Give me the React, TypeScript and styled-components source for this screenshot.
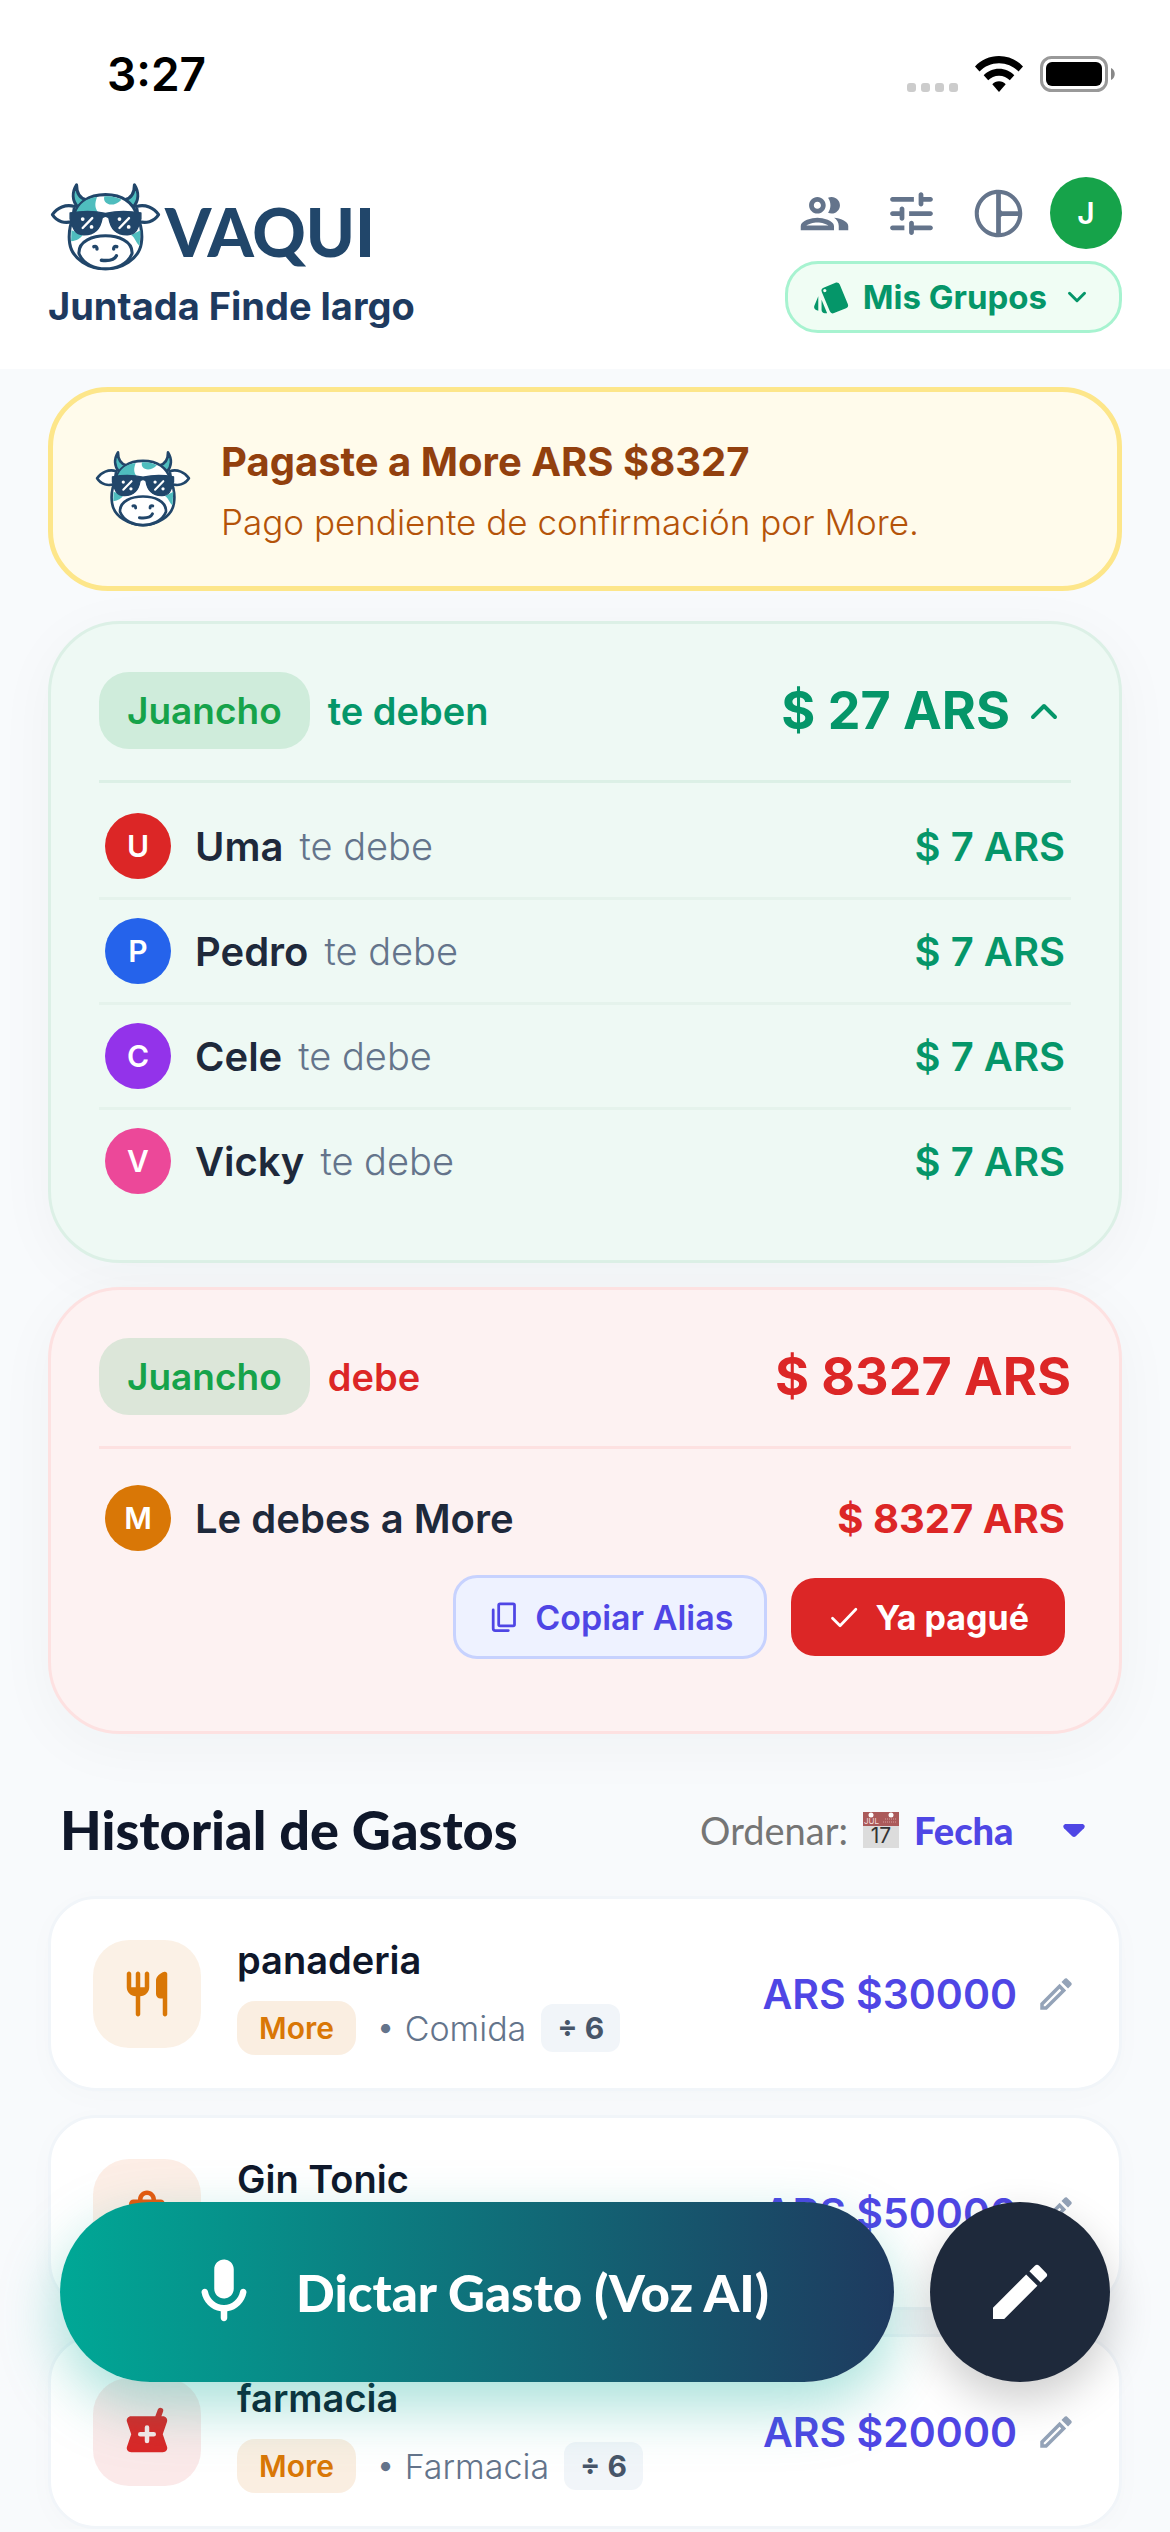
import { useState } from "react";
import styled, { createGlobalStyle } from "styled-components";
import { MdEdit, MdOutlineEdit, MdOutlineGroup, MdStyle } from "react-icons/md";

const GlobalStyle = createGlobalStyle`
    * {
        box-sizing: border-box;
    }

    body {
        margin: 0;
        background: #f8fafc;
        font-family: Inter, "Liberation Sans", sans-serif;
    }

    button, select {
        font-family: inherit;
        margin: 0;
        padding: 0;
        border: none;
        background: none;
        cursor: pointer;
    }

    svg {
        display: block;
        flex-shrink: 0;
    }
`

const Top = styled.header`
    background: #fff;
    padding: 0 48px 36px;
`

const StatusBar = styled.div`
    height: 177px;
    padding: 45px 7px 0 59px;
    display: flex;
    align-items: flex-start;
    justify-content: space-between;
`

const Clock = styled.span`
    color: #000;
    font-size: 46px;
    line-height: 58px;
    font-weight: 600;
`

const StatusIcons = styled.div`
    height: 58px;
    display: flex;
    align-items: center;
    gap: 17px;
`

const TopRow = styled.div`
    display: flex;
    justify-content: space-between;
    align-items: flex-start;
`

const Brand = styled.div`
    display: flex;
    flex-direction: column;
`

const BrandName = styled.div`
    height: 99px;
    padding-left: 2px;
    display: flex;
    align-items: center;
    gap: 4px;
`

const Wordmark = styled.span`
    padding-top: 9px;
    color: #21466a;
    font-family: Lato, "Liberation Sans", sans-serif;
    font-size: 66px;
    font-weight: 900;
`

const GroupName = styled.h1`
    margin: 6px 0 0;
    color: #1e3a5f;
    font-size: 38px;
    line-height: 48px;
    font-weight: 700;
`

const Tools = styled.div`
    display: flex;
    flex-direction: column;
    align-items: flex-end;
    gap: 12px;
`

const ToolIcons = styled.div`
    display: flex;
    align-items: center;
`

const ToolButton = styled.button`
    width: 87px;
    height: 72px;
    display: flex;
    align-items: center;
    justify-content: center;
    color: #64748b;
`

const Avatar = styled.span<{ $color: string, $size: number }>`
    width: ${p => p.$size}px;
    height: ${p => p.$size}px;
    border-radius: 50%;
    background: ${p => p.$color};
    color: #fff;
    font-size: 30px;
    font-weight: 600;
    display: flex;
    align-items: center;
    justify-content: center;
    flex-shrink: 0;
`

const ProfileButton = styled.button`
    margin-left: 8px;
`

const GroupsButton = styled.button`
    height: 72px;
    padding: 0 24px;
    display: flex;
    align-items: center;
    gap: 12px;
    border: 3px solid #a7f3d0;
    border-radius: 33px;
    background: #f0fdf4;
    color: #059669;
    font-size: 33px;
    font-weight: 700;
`

const Page = styled.main`
    padding: 18px 48px 0;
`

const Notice = styled.section`
    height: 204px;
    padding: 0 42px;
    display: flex;
    align-items: center;
    gap: 30px;
    border: 5px solid #fde68a;
    border-radius: 60px;
    background: #fffbeb;
`

const NoticeBody = styled.div`
    padding-top: 6px;
`

const NoticeTitle = styled.div`
    color: #92400e;
    font-size: 40px;
    line-height: 54px;
    font-weight: 700;
`

const NoticeText = styled.div`
    margin-top: 6px;
    color: #b45309;
    font-size: 35px;
    line-height: 54px;
    font-weight: 300;
`

const tones = {
    green: { text: "#059669", background: "#eef9f4", line: "#dcf0e6", soft: "#e5f3ec" },
    red: { text: "#dc2626", background: "#fdf2f2", line: "#fde1e1", soft: "#fde1e1" },
}

type Tone = keyof typeof tones

const BalanceCard = styled.section<{ $tone: Tone }>`
    margin-top: ${p => p.$tone === "green" ? 30 : 24}px;
    padding: 48px;
    border: 3px solid ${p => tones[p.$tone].line};
    border-radius: 72px;
    background: ${p => tones[p.$tone].background};
    color: ${p => tones[p.$tone].text};
    box-shadow: 0 12px 60px rgba(30, 41, 59, 0.04);
`

const BalanceHead = styled.div<{ $tone: Tone }>`
    padding-bottom: 31px;
    margin-bottom: 12px;
    border-bottom: 3px solid ${p => tones[p.$tone].line};
    display: flex;
    align-items: center;
    font-size: 38px;
    font-weight: 600;
`

const PersonChip = styled.span`
    height: 77px;
    padding: 0 28px;
    margin-right: 18px;
    display: flex;
    align-items: center;
    border-radius: 30px;
    background: rgba(22, 163, 74, 0.14);
    color: #16a34a;
    font-size: 37px;
`

const Total = styled.span`
    margin-left: auto;
    font-size: 52px;
    line-height: 66px;
    font-weight: 700;
`

const ToggleButton = styled.button`
    margin-left: 10px;
    padding-right: 3px;
    color: inherit;
`

const List = styled.ul`
    margin: 0;
    padding: 0;
    list-style: none;
`

const DebtLine = styled.div`
    padding: 18px 6px;
    display: flex;
    align-items: center;
    font-size: 40px;
    font-weight: 600;
`

const DebtItem = styled.li`
    &:not(:last-child) {
        border-bottom: 3px solid ${tones.green.soft};
    }
`

const DebtName = styled.span`
    margin-left: 24px;
    color: #1e293b;
`

const DebtNote = styled.span`
    margin-left: 16px;
    color: #64748b;
    font-size: 38px;
    font-weight: 300;
`

const DebtAmount = styled.span<{ $bold?: boolean }>`
    margin-left: auto;
    font-weight: ${p => p.$bold ? 700 : 600};
`

const OwedItem = styled.li`
    padding: 6px 0 24px;
`

const Actions = styled.div`
    padding: 6px 6px 0;
    display: flex;
    align-items: center;
    justify-content: flex-end;
    gap: 24px;
`

const ActionButton = styled.button<{ $filled?: boolean }>`
    height: ${p => p.$filled ? 78 : 84}px;
    padding: 0 ${p => p.$filled ? 36 : 31}px;
    display: flex;
    align-items: center;
    gap: 15px;
    border: ${p => p.$filled ? "none" : "3px solid #c7d2fe"};
    border-radius: 24px;
    background: ${p => p.$filled ? "#dc2626" : "#eef2ff"};
    color: ${p => p.$filled ? "#fff" : "#4f46e5"};
    font-size: 34px;
    font-weight: ${p => p.$filled ? 700 : 600};
`

const HistoryHead = styled.div`
    padding: 63px 36px 33px 12px;
    display: flex;
    align-items: center;
    justify-content: space-between;
    font-family: Lato, "Liberation Sans", sans-serif;
`

const HistoryTitle = styled.h2`
    margin: 0;
    color: #0f172a;
    font-size: 54px;
    line-height: 66px;
    font-weight: 900;
`

const Sort = styled.div`
    display: flex;
    align-items: center;
    font-size: 38px;
    color: #757575;
`

const SortLabel = styled.label`
    margin-right: 15px;
`

const SortSelect = styled.select`
    width: 148px;
    margin-left: 15px;
    appearance: none;
    outline: none;
    color: #4f46e5;
    font-size: 38px;
    font-weight: 900;
`

const Expenses = styled.ul`
    margin: 0;
    padding: 0;
    list-style: none;
    display: flex;
    flex-direction: column;
    gap: 24px;
`

const ExpenseCard = styled.li`
    height: 195px;
    padding: 0 42px;
    display: flex;
    align-items: center;
    border: 3px solid #f1f5f9;
    border-radius: 48px;
    background: #fff;
    box-shadow: 0 6px 30px rgba(15, 23, 42, 0.02);
`

const ExpenseIcon = styled.span<{ $color: string }>`
    width: 108px;
    height: 108px;
    margin-right: 36px;
    display: flex;
    align-items: center;
    justify-content: center;
    flex-shrink: 0;
    border-radius: 36px;
    background: ${p => p.$color}1a;
    color: ${p => p.$color};
`

const ExpenseBody = styled.div`
    padding-top: 4px;
`

const ExpenseTitle = styled.div`
    margin-bottom: 17px;
    color: #0f172a;
    font-size: 38px;
    line-height: 48px;
    font-weight: 600;
`

const ExpenseInfo = styled.div`
    display: flex;
    align-items: center;
    color: #64748b;
    font-size: 34px;
    font-weight: 300;
`

const PayerChip = styled.span`
    height: 54px;
    padding: 0 22px;
    margin-right: 20px;
    display: flex;
    align-items: center;
    border-radius: 18px;
    background: #d977061f;
    color: #d97706;
    font-size: 30px;
    font-weight: 600;
`

const SplitChip = styled.span`
    height: 48px;
    padding: 0 16px;
    margin-left: 15px;
    display: flex;
    align-items: center;
    border-radius: 12px;
    background: #f1f5f9;
    color: #475569;
    font-size: 30px;
    font-weight: 700;
`

const ExpenseAmount = styled.span`
    margin-left: auto;
    color: #4f46e5;
    font-size: 41px;
    font-weight: 600;
`

const EditButton = styled.button`
    margin-left: 18px;
    color: #94a3b8;
`

const FloatingBar = styled.div`
    position: fixed;
    left: 60px;
    right: 60px;
    bottom: 150px;
    display: flex;
    gap: 36px;
`

const VoiceButton = styled.button`
    flex: 1;
    height: 180px;
    display: flex;
    align-items: center;
    justify-content: center;
    gap: 33px;
    border-radius: 90px;
    background: linear-gradient(90deg, #00a896, #1e3a5f);
    box-shadow: 0 24px 60px rgba(0, 168, 150, 0.35);
    color: #fff;
    font-family: Lato, "Liberation Sans", sans-serif;
    font-size: 51px;
    font-weight: 900;
`

const WriteButton = styled.button`
    width: 180px;
    height: 180px;
    display: flex;
    align-items: center;
    justify-content: center;
    border-radius: 50%;
    background: #1e293b;
    box-shadow: 0 18px 45px rgba(0, 0, 0, 0.2);
    color: #fff;
`

const Cow = ({ width }: { width: number }) => (
    <svg width={width} viewBox="34 30 326 262" fill="none" stroke="#21466a" strokeWidth="9" strokeLinejoin="round" strokeLinecap="round">
        <path fill="#fff" d="M106 102C80 94 55 106 41 126c14 22 38 26 58 20zM288 102c26-8 51 4 65 24-14 22-38 26-58 20z" />
        <path fill="#4fbdbe" d="M112 38c-14 22-13 47 4 66l24-22c-20-5-28-20-28-44zM282 38c14 22 13 47-4 66l-24-22c20-5 28-20 28-44z" />
        <path fill="#fff" d="M197 67c-52 0-82 26-93 62-12 28-16 58-12 82 7 46 58 74 105 74s98-28 105-74c4-24 0-54-12-82-11-36-41-62-93-62z" />
        <g fill="#4fbdbe" stroke="none">
            <path d="M172 74c-6 18-8 30 4 46l-66 2c8-28 32-45 62-48zM194 72c-8 20 22 38 50 10-14-8-32-12-50-10zM97 172l34 12c-8 12-18 18-35 20zM300 172l-28 14c12 8 14 22 25 32z" />
        </g>
        <path fill="#fff" d="M119 240c-2-38 42-52 78-52s80 14 78 52c-12 32-48 45-78 45s-66-13-78-45z" />
        <path fill="#21466a" strokeWidth="4" d="M93 121c34-6 72-6 104 1 32-7 70-7 104-1v18c-6 6-4 45-39 46-34 1-50-18-55-49-6-7-14-7-20 0-5 31-21 50-55 49-35-1-33-40-39-46z" />
        <g stroke="#fff" strokeWidth="7">
            <path d="M130 165l28-29M238 165l28-29" />
            <path strokeWidth="11" d="M130 139h.1M156 162h.1M238 139h.1M265 162h.1" />
        </g>
        <path strokeWidth="10" d="M163 220q9-3 9 7M230 220q-9-3-9 7M185 260q36 4 44-13" />
    </svg>
)

const icons = {
    tune: "M3 18c0 .55.45 1 1 1h5v-2H4c-.55 0-1 .45-1 1zM3 6c0 .55.45 1 1 1h9V5H4c-.55 0-1 .45-1 1zm10 14v-1h7c.55 0 1-.45 1-1s-.45-1-1-1h-7v-1c0-.55-.45-1-1-1s-1 .45-1 1v4c0 .55.45 1 1 1s1-.45 1-1zM7 10v1H4c-.55 0-1 .45-1 1s.45 1 1 1h3v1c0 .55.45 1 1 1s1-.45 1-1v-4c0-.55-.45-1-1-1s-1 .45-1 1zm14 2c0-.55-.45-1-1-1h-9v2h9c.55 0 1-.45 1-1zm-5-3c.55 0 1-.45 1-1V7h3c.55 0 1-.45 1-1s-.45-1-1-1h-3V4c0-.55-.45-1-1-1s-1 .45-1 1v4c0 .55.45 1 1 1z",
    pie: "M12 2C6.48 2 2 6.48 2 12s4.48 10 10 10 10-4.48 10-10S17.52 2 12 2zm1 1.77c3.8.45 6.78 3.43 7.23 7.23h-6.73L13 10.5zM3.7 12c0-4.2 3.13-7.7 7.3-8.23v16.46c-4.17-.53-7.3-4.03-7.3-8.23zm9.3 8.23V13.5l.5-.5h6.73c-.45 3.8-3.43 6.78-7.23 7.23z",
    food: "M16 6v6c0 1.1.9 2 2 2h1v7c0 .55.45 1 1 1s1-.45 1-1V3.13c0-.65-.61-1.13-1.24-.98C17.6 2.68 16 4.51 16 6zm-5 3H9V3c0-.55-.45-1-1-1s-1 .45-1 1v6H5V3c0-.55-.45-1-1-1s-1 .45-1 1v6c0 2.21 1.79 4 4 4v8c0 .55.45 1 1 1s1-.45 1-1v-8c2.21 0 4-1.79 4-4V3c0-.55-.45-1-1-1s-1 .45-1 1v6z",
    bag: "M18 6h-2c0-2.21-1.79-4-4-4S8 3.79 8 6H6c-1.1 0-2 .9-2 2v12c0 1.1.9 2 2 2h12c1.1 0 2-.9 2-2V8c0-1.1-.9-2-2-2zm-6-2c1.1 0 2 .9 2 2h-4c0-1.1.9-2 2-2z",
    pharmacy: "M19 5h-.6l.75-2.1a1.25 1.25 0 0 0-2.35-.85L15.7 5H5c-1.4 0-2.3 1.2-1.9 2.4L5 13l-1.9 5.6C2.7 19.8 3.6 21 5 21h14c1.4 0 2.3-1.2 1.9-2.4L19 13l1.9-5.6C21.3 6.2 20.4 5 19 5zm-4 9h-2v2a1 1 0 0 1-2 0v-2H9a1 1 0 0 1 0-2h2v-2a1 1 0 0 1 2 0v2h2a1 1 0 0 1 0 2z",
    mic: "M12 14c1.66 0 3-1.34 3-3V5c0-1.66-1.34-3-3-3S9 3.34 9 5v6c0 1.66 1.34 3 3 3zm5.91-3c-.49 0-.9.36-.98.85C16.52 14.2 14.47 16 12 16s-4.52-1.8-4.93-4.15c-.08-.49-.49-.85-.98-.85-.61 0-1.09.54-1 1.14.49 3 2.89 5.35 5.91 5.78V20c0 .55.45 1 1 1s1-.45 1-1v-2.08c3.02-.43 5.42-2.78 5.91-5.78.1-.6-.39-1.14-1-1.14z",
}

type IconName = keyof typeof icons

const Icon = ({ name, size }: { name: IconName, size: number }) => (
    <svg width={size} height={size} viewBox="0 0 24 24" fill="currentColor">
        <path d={icons[name]} />
    </svg>
)

const LineIcon = ({ d, size }: { d: string, size: number }) => (
    <svg width={size} height={size} viewBox="0 0 24 24" fill="none" stroke="currentColor" strokeWidth="2" strokeLinecap="round" strokeLinejoin="round">
        <path d={d} />
    </svg>
)

const Signal = () => (
    <svg width="51" height="36" viewBox="0 0 51 36" fill="#ccc">
        <rect x="0" y="27" width="9" height="9" rx="3" />
        <rect x="14" y="27" width="9" height="9" rx="3" />
        <rect x="28" y="27" width="9" height="9" rx="3" />
        <rect x="42" y="27" width="9" height="9" rx="3" />
    </svg>
)

const Wifi = () => (
    <svg width="48" height="36" viewBox="0 0 48 36">
        <path d="M24 0C14.6 0 6.2 3.8 0 10.5l4.5 5C9.6 10.2 16.4 7.2 24 7.2s14.4 3 19.5 8.3l4.5-5C41.8 3.8 33.4 0 24 0z" />
        <path d="M24 12.7c-6 0-11.4 2.5-15.3 6.5l4.5 5.1c2.7-2.8 6.5-4.6 10.8-4.6s8.1 1.8 10.8 4.6l4.5-5.1c-3.9-4-9.3-6.5-15.3-6.5z" />
        <path d="M24 25.2c-2.7 0-5.1 1.2-6.7 3L24 36l6.7-7.8c-1.6-1.8-4-3-6.7-3z" />
    </svg>
)

const Battery = () => (
    <svg width="75" height="36" viewBox="0 0 75 36">
        <rect x="1.5" y="1.5" width="65" height="33" rx="10" fill="none" stroke="#999" strokeWidth="3" />
        <rect x="6" y="6" width="56" height="24" rx="6" />
        <path d="M71 12c5 2 5 10 0 12z" fill="#888" />
    </svg>
)

const Calendar = () => (
    <svg width="36" height="36" viewBox="0 0 36 36">
        <rect width="36" height="36" fill="#dcdcdc" />
        <rect width="36" height="14" fill="#ab5a5a" />
        <circle cx="8" cy="3" r="2.5" fill="#fff" />
        <circle cx="28" cy="3" r="2.5" fill="#fff" />
        <path d="M20 10h14M22 7h12" stroke="#c07c7c" strokeWidth="2" strokeDasharray="1 1" />
        <text x="1" y="12" fontFamily="Inter, sans-serif" fontSize="8" fill="#f3dcdc">JUL</text>
        <text x="18" y="31" fontFamily="Inter, sans-serif" fontSize="21" textAnchor="middle" fill="#333">17</text>
    </svg>
)

const debtors = [
    { name: "Uma", color: "#dc2626", amount: 7 },
    { name: "Pedro", color: "#2563eb", amount: 7 },
    { name: "Cele", color: "#9333ea", amount: 7 },
    { name: "Vicky", color: "#ec4899", amount: 7 },
]

const expenses: { title: string, payer: string, category: string, split: number, amount: number, icon: IconName, color: string }[] = [
    { title: "panaderia", payer: "More", category: "Comida", split: 6, amount: 30000, icon: "food", color: "#d97706" },
    { title: "Gin Tonic", payer: "More", category: "Compras", split: 6, amount: 50000, icon: "bag", color: "#ea580c" },
    { title: "farmacia", payer: "More", category: "Farmacia", split: 6, amount: 20000, icon: "pharmacy", color: "#dc2626" },
]

export default function App() {

    const [ open, setOpen ] = useState(true);
    const [ sort, setSort ] = useState("fecha");

    return (
        <>
            <GlobalStyle />
            <Top>
                <StatusBar>
                    <Clock>3:27</Clock>
                    <StatusIcons>
                        <Signal />
                        <Wifi />
                        <Battery />
                    </StatusIcons>
                </StatusBar>
                <TopRow>
                    <Brand>
                        <BrandName>
                            <Cow width={111} />
                            <Wordmark>VAQUI</Wordmark>
                        </BrandName>
                        <GroupName>Juntada Finde largo</GroupName>
                    </Brand>
                    <Tools>
                        <ToolIcons>
                            <ToolButton aria-label="Participantes"><MdOutlineGroup size={57} /></ToolButton>
                            <ToolButton aria-label="Ajustes"><Icon name="tune" size={57} /></ToolButton>
                            <ToolButton aria-label="Resumen"><Icon name="pie" size={57} /></ToolButton>
                            <ProfileButton aria-label="Perfil"><Avatar $color="#16a34a" $size={72}>J</Avatar></ProfileButton>
                        </ToolIcons>
                        <GroupsButton>
                            <MdStyle size={39} />
                            Mis Grupos
                            <LineIcon d="M7 9.5l5 5 5-5" size={36} />
                        </GroupsButton>
                    </Tools>
                </TopRow>
            </Top>
            <Page>
                <Notice>
                    <Cow width={96} />
                    <NoticeBody>
                        <NoticeTitle>Pagaste a More ARS $8327</NoticeTitle>
                        <NoticeText>Pago pendiente de confirmación por More.</NoticeText>
                    </NoticeBody>
                </Notice>
                <BalanceCard $tone="green">
                    <BalanceHead $tone="green">
                        <PersonChip>Juancho</PersonChip>
                        te deben
                        <Total>$ 27 ARS</Total>
                        <ToggleButton aria-label="Ver detalle" aria-expanded={open} onClick={() => setOpen(!open)}>
                            <LineIcon d={open ? "M6.5 15l5.5-5.5 5.5 5.5" : "M6.5 9l5.5 5.5 5.5-5.5"} size={48} />
                        </ToggleButton>
                    </BalanceHead>
                    {open && (
                        <List>
                            {debtors.map(d => (
                                <DebtItem key={d.name}>
                                    <DebtLine>
                                        <Avatar $color={d.color} $size={66}>{d.name[0]}</Avatar>
                                        <DebtName>{d.name}</DebtName>
                                        <DebtNote>te debe</DebtNote>
                                        <DebtAmount>$ {d.amount} ARS</DebtAmount>
                                    </DebtLine>
                                </DebtItem>
                            ))}
                        </List>
                    )}
                </BalanceCard>
                <BalanceCard $tone="red">
                    <BalanceHead $tone="red">
                        <PersonChip>Juancho</PersonChip>
                        debe
                        <Total>$ 8327 ARS</Total>
                    </BalanceHead>
                    <List>
                        <OwedItem>
                            <DebtLine>
                                <Avatar $color="#d97706" $size={66}>M</Avatar>
                                <DebtName>Le debes a More</DebtName>
                                <DebtAmount $bold>$ 8327 ARS</DebtAmount>
                            </DebtLine>
                            <Actions>
                                <ActionButton>
                                    <LineIcon d="M9.5 2h9.5q1 0 1 1v14q0 1-1 1H9.5q-1 0-1-1V3q0-1 1-1zM4.5 6.5V20q0 1.5 1.5 1.5h9.5" size={33} />
                                    Copiar Alias
                                </ActionButton>
                                <ActionButton $filled>
                                    <LineIcon d="M4 12.5l5.5 5.5L21 6" size={33} />
                                    Ya pagué
                                </ActionButton>
                            </Actions>
                        </OwedItem>
                    </List>
                </BalanceCard>
                <HistoryHead>
                    <HistoryTitle>Historial de Gastos</HistoryTitle>
                    <Sort>
                        <SortLabel htmlFor="sort">Ordenar:</SortLabel>
                        <Calendar />
                        <SortSelect id="sort" value={sort} onChange={e => setSort(e.target.value)}>
                            <option value="fecha">Fecha</option>
                        </SortSelect>
                        <svg width="24" height="15" viewBox="0 0 24 15" fill="#4f46e5">
                            <path d="M4 1h16c2.5 0 3.5 2.5 2 4.2l-8.2 8c-1.2 1.1-2.4 1.1-3.6 0L2 5.2C.5 3.5 1.5 1 4 1z" />
                        </svg>
                    </Sort>
                </HistoryHead>
                <Expenses>
                    {expenses.map(e => (
                        <ExpenseCard key={e.title}>
                            <ExpenseIcon $color={e.color}><Icon name={e.icon} size={54} /></ExpenseIcon>
                            <ExpenseBody>
                                <ExpenseTitle>{e.title}</ExpenseTitle>
                                <ExpenseInfo>
                                    <PayerChip>{e.payer}</PayerChip>
                                    • {e.category}
                                    <SplitChip>÷ {e.split}</SplitChip>
                                </ExpenseInfo>
                            </ExpenseBody>
                            <ExpenseAmount>ARS ${e.amount}</ExpenseAmount>
                            <EditButton aria-label={`Editar ${e.title}`}><MdOutlineEdit size={42} /></EditButton>
                        </ExpenseCard>
                    ))}
                </Expenses>
            </Page>
            <FloatingBar>
                <VoiceButton>
                    <Icon name="mic" size={78} />
                    Dictar Gasto (Voz AI)
                </VoiceButton>
                <WriteButton aria-label="Escribir gasto"><MdEdit size={72} /></WriteButton>
            </FloatingBar>
        </>
    )
}
